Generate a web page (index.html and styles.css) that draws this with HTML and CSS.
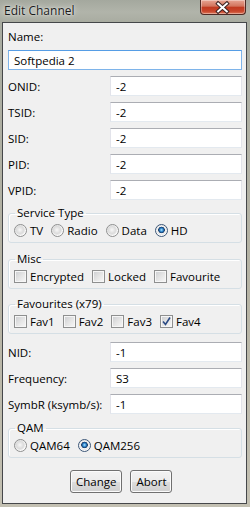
FILE: index.html
```html
<!DOCTYPE html>
<html lang="en">

<head>
   <meta charset="UTF-8">
   <meta name="viewport" content="width=device-width, initial-scale=1.0">
   <title>Edit Channel</title>
   <link rel="stylesheet" href="styles.css">
</head>

<body>
   <div class="window">
      <!-- barra de titulo -->
      <div class="titlebar">
         <span class="title">Edit Channel</span>
         <span class="close-btn">
            <svg width="46" height="15" viewBox="0 0 46 15">
               <path d="M18.5 3.5 L27.5 11.5 M27.5 3.5 L18.5 11.5" stroke="#3a2222" stroke-width="4" stroke-linecap="square" />
               <path d="M18.5 3.5 L27.5 11.5 M27.5 3.5 L18.5 11.5" stroke="#ffffff" stroke-width="2" stroke-linecap="square" />
            </svg>
         </span>
      </div>

      <div class="client">
         <label class="name-label" for="name">Name:</label>
         <input class="textbox name-box" id="name" type="text" value="Softpedia 2">

         <div class="field"><label>ONID:</label><input class="textbox" type="text" value="-2"></div>
         <div class="field"><label>TSID:</label><input class="textbox" type="text" value="-2"></div>
         <div class="field"><label>SID:</label><input class="textbox" type="text" value="-2"></div>
         <div class="field"><label>PID:</label><input class="textbox" type="text" value="-2"></div>
         <div class="field"><label>VPID:</label><input class="textbox" type="text" value="-2"></div>

         <fieldset class="group group-service">
            <legend>Service Type</legend>
            <div class="options">
               <span class="opt"><span class="radio"></span>TV</span>
               <span class="opt"><span class="radio"></span>Radio</span>
               <span class="opt"><span class="radio"></span>Data</span>
               <span class="opt"><span class="radio on"></span>HD</span>
            </div>
         </fieldset>

         <fieldset class="group group-misc">
            <legend>Misc</legend>
            <div class="options">
               <span class="opt"><span class="check"></span>Encrypted</span>
               <span class="opt"><span class="check"></span>Locked</span>
               <span class="opt"><span class="check"></span>Favourite</span>
            </div>
         </fieldset>

         <fieldset class="group group-fav">
            <legend>Favourites (x79)</legend>
            <div class="options">
               <span class="opt"><span class="check"></span>Fav1</span>
               <span class="opt"><span class="check"></span>Fav2</span>
               <span class="opt"><span class="check"></span>Fav3</span>
               <span class="opt"><span class="check">
                     <svg width="11" height="11" viewBox="0 0 11 11">
                        <path d="M2 5.5 L4.5 8.5 L9 1.5" fill="none" stroke="#2b4a84" stroke-width="1.6" />
                     </svg>
                  </span>Fav4</span>
            </div>
         </fieldset>

         <div class="field field-nid"><label>NID:</label><input class="textbox" type="text" value="-1"></div>
         <div class="field"><label>Frequency:</label><input class="textbox" type="text" value="S3"></div>
         <div class="field"><label>SymbR (ksymb/s):</label><input class="textbox" type="text" value="-1"></div>

         <fieldset class="group group-qam">
            <legend>QAM</legend>
            <div class="options">
               <span class="opt"><span class="radio"></span>QAM64</span>
               <span class="opt"><span class="radio on"></span>QAM256</span>
            </div>
         </fieldset>

         <div class="actions">
            <button class="btn">Change</button>
            <button class="btn">Abort</button>
         </div>
      </div>
   </div>
</body>

</html>
```

FILE: styles.css
```css
/* Ventana estilo Windows 7 */
body {
   margin: 0;
   font-family: "Open Sans", "Noto Sans", sans-serif;
   font-size: 11.5px;
   color: #000;
}

.window {
   width: 250px;
   height: 507px;
   box-sizing: border-box;
   display: flex;
   flex-direction: column;
   background: linear-gradient(to bottom, #a4a89e 0, #b1b4aa 12px, #a9aca1 22px, #b7b4a5 60%, #c3c0b2 100%);
}

/* Barra de titulo */
.titlebar {
   height: 22px;
   display: flex;
   justify-content: space-between;
   align-items: flex-start;
}

.title {
   margin: 3px 0 0 4px;
   font-size: 12px;
   line-height: 15px;
   color: #1b1b1b;
   text-shadow: 0 0 6px rgba(255, 255, 255, 0.9), 0 0 2px rgba(255, 255, 255, 0.7);
}

.close-btn {
   width: 46px;
   height: 15px;
   margin-right: 4px;
   box-sizing: border-box;
   border: 1px solid #4f2a24;
   border-top: none;
   border-radius: 0 0 4px 4px;
   background: linear-gradient(to bottom, #e7a593 0, #d2735c 45%, #c0391f 50%, #c8452b 80%, #dd7a5c 100%);
   box-shadow: inset 0 0 0 1px rgba(255, 255, 255, 0.35);
   display: flex;
}

.close-btn svg {
   margin-left: -1px;
}

/* Area cliente */
.client {
   flex: 1;
   margin: 0 3px 3px 2px;
   border: 1px solid #45474a;
   background: #f0f0f0;
   padding: 6px 4px 0 5px;
   display: flex;
   flex-direction: column;
}

.name-label {
   line-height: 16px;
}

.textbox {
   box-sizing: border-box;
   height: 20px;
   margin: 0;
   padding: 0 5px;
   border: 1px solid #e2e3ea;
   border-top-color: #abadb3;
   border-bottom-color: #e3e9ef;
   background: #fff;
   font-family: inherit;
   font-size: 11.5px;
   color: #000;
   outline: none;
}

.name-box {
   margin-top: 5px;
   border-color: #7eb4ea;
   border-top-color: #569de5;
}

.field {
   display: grid;
   grid-template-columns: 102px 1fr;
   align-items: center;
   margin-top: 6px;
}

.field .textbox {
   width: 100%;
}

.field-nid {
   margin-top: 8px;
}

/* Cuadros de grupo */
.group {
   margin: 6px 0 0 0;
   padding: 0 5px 4px 5px;
   border: 1px solid #d5dfe5;
   border-radius: 3px;
   box-shadow: inset 1px 1px 0 #fff;
}

.group-misc {
   margin-top: 9px;
}

.group-fav {
   margin-top: 8px;
}

.group-qam {
   margin-top: 7px;
}

.group legend {
   padding: 0 2px;
   margin-left: 1px;
   line-height: 14px;
}

.options {
   display: flex;
   align-items: center;
   height: 16px;
   margin-top: 2px;
}

.opt {
   display: flex;
   align-items: center;
   margin-right: 8px;
}

/* Radio */
.radio {
   width: 13px;
   height: 13px;
   box-sizing: border-box;
   margin-right: 3px;
   border: 1px solid #8e8f8f;
   border-radius: 50%;
   background: radial-gradient(circle at 45% 45%, #f8f8f8 0, #dcdcdc 3.5px, #e4e4e4 4.5px, #fbfbfb 5.5px);
}

.radio.on {
   border-color: #3c5778;
   background: radial-gradient(circle at 50% 45%, #b9e4fc 0, #3f98d9 1.4px, #1a5a9c 2.4px, #1b3a60 3px, #f4f4f4 3.6px, #e8e8e8 4.6px, #fbfbfb 5.5px);
}

/* Casilla */
.check {
   width: 13px;
   height: 13px;
   box-sizing: border-box;
   margin-right: 3px;
   border: 1px solid #8e8f8f;
   background: linear-gradient(135deg, #cbcdd0 0, #e4e4e4 50%, #f8f8f8 100%);
   box-shadow: inset 0 0 0 1px #f6f6f6;
   display: flex;
}

/* Botones */
.actions {
   display: flex;
   gap: 8px;
   margin-top: 12px;
   padding-left: 62px;
}

.btn {
   height: 23px;
   padding: 0 5px;
   margin: 0;
   border: 1px solid #707070;
   border-radius: 3px;
   background: linear-gradient(to bottom, #f2f2f2 0, #ebebeb 50%, #dddddd 51%, #cfcfcf 100%);
   box-shadow: inset 0 0 0 1px #fbfbfb;
   font-family: inherit;
   font-size: 11.5px;
   color: #000;
}
```
